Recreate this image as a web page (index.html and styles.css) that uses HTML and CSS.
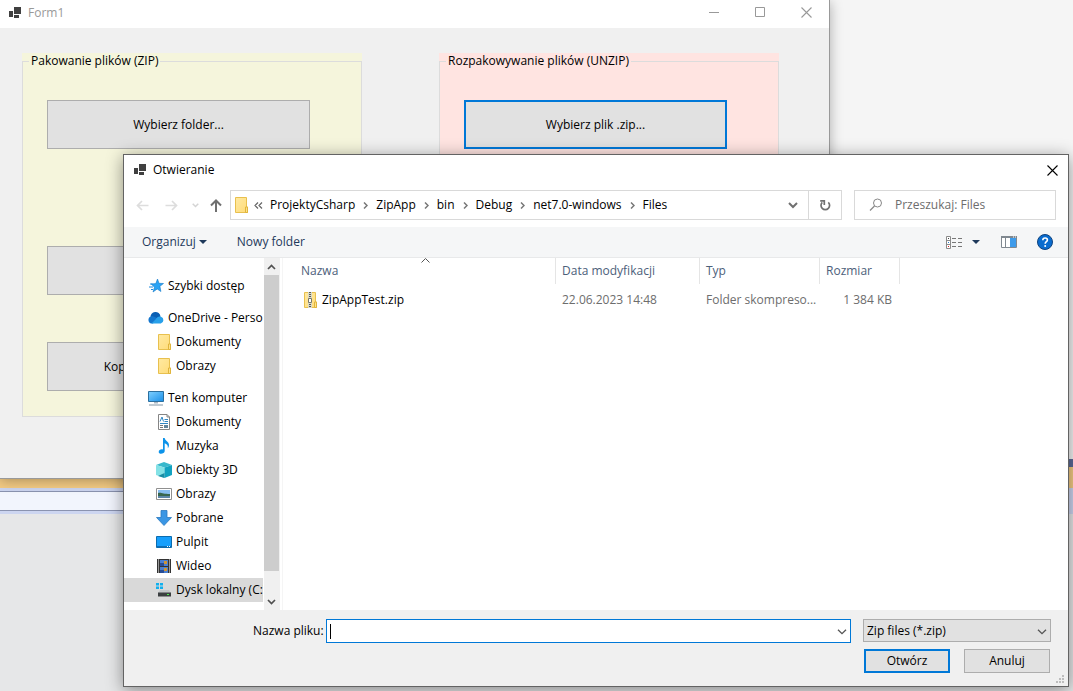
FILE: index.html
```html
<!DOCTYPE html>
<html lang="pl">
<head>
<meta charset="utf-8">
<title>Form1</title>
<link rel="stylesheet" href="styles.css">
</head>
<body>
<svg class="defs" width="0" height="0" aria-hidden="true">
  <defs>
    <linearGradient id="gFolder" x1="0" y1="0" x2="1" y2="1"><stop offset="0" stop-color="#ffe9a2"/><stop offset="1" stop-color="#ffdc78"/></linearGradient>
    <linearGradient id="gBlue" x1="0" y1="0" x2="1" y2="1"><stop offset="0" stop-color="#7fd0ff"/><stop offset="1" stop-color="#1a8fe8"/></linearGradient>
    <symbol id="app" viewBox="0 0 13 12">
      <path fill="#404040" d="M5 0h7v7H5zM0 4h4v6H0zM5 8h5v3H5z"/>
    </symbol>
    <symbol id="folder" viewBox="0 0 16 16">
      <path d="M2.500 .5h11v9.500h1v5.500h-12z" fill="url(#gFolder)" stroke="#e8c04e"/>
      <path d="M12.500 15.500V10h2v5.500z" fill="#ffe28a" stroke="#e0b53c"/>
    </symbol>
    <symbol id="chev" viewBox="0 0 5 7"><path d="M1 .5l3 3-3 3" fill="none" stroke="#777" stroke-width="1.500"/></symbol>
    <symbol id="down" viewBox="0 0 10 6"><path d="M1 .7l4 4 4-4" fill="none" stroke="currentColor" stroke-width="1.300"/></symbol>
    <symbol id="tri" viewBox="0 0 8 4"><path d="M0 0h8L4 4z" fill="#1e395b"/></symbol>
    <symbol id="close" viewBox="0 0 11 11"><path d="M.5 .5l10 10M10.500 .5l-10 10" fill="none" stroke="currentColor" stroke-width="1.100"/></symbol>
  </defs>
</svg>

<div class="desktop">
  <div class="band band-top"></div>
  <div class="band band-navy"></div>
  <div class="band band-tab"></div>
  <div class="band band-frame"><div class="band-field"></div></div>
  <div class="band band-rest"></div>

  <section class="form" aria-label="Form1">
    <header class="form-title">
      <svg class="app-icon" aria-hidden="true"><use href="#app"/></svg>
      <span class="form-name">Form1</span>
      <div class="win-controls">
        <button class="win-btn" aria-label="Minimalizuj"><svg width="11" height="11"><path d="M0 5.500h10" stroke="#999"/></svg></button>
        <button class="win-btn" aria-label="Maksymalizuj"><svg width="11" height="11"><path d="M.5 .5h9v9h-9z" fill="none" stroke="#999"/></svg></button>
        <button class="win-btn" aria-label="Zamknij"><svg width="11" height="11"><use href="#close"/></svg></button>
      </div>
    </header>
    <div class="form-body">
      <div class="group group-zip">
        <fieldset class="box">
          <legend>Pakowanie plików (ZIP)</legend>
          <div class="actions">
            <button class="big">Wybierz folder...</button>
            <button class="big push" aria-label="Pakuj"></button>
            <button class="big next">Kopiuj plik do folderu ZIP...</button>
          </div>
        </fieldset>
      </div>
      <div class="group group-unzip">
        <fieldset class="box">
          <legend>Rozpakowywanie plików (UNZIP)</legend>
          <div class="actions">
            <button class="big focused">Wybierz plik .zip...</button>
          </div>
        </fieldset>
      </div>
    </div>
  </section>

  <section class="dialog" role="dialog" aria-labelledby="dlg-title">
    <header class="dlg-title">
      <svg class="app-icon" aria-hidden="true"><use href="#app"/></svg>
      <span class="dlg-name" id="dlg-title">Otwieranie</span>
      <button class="dlg-close" aria-label="Zamknij"><svg width="11" height="11"><use href="#close"/></svg></button>
    </header>

    <nav class="nav">
      <div class="history">
        <button class="nav-btn" aria-label="Wstecz"><svg width="13" height="11"><path d="M12.500 5.500H1.500M6 1L1.500 5.500 6 10" fill="none" stroke="#ddd" stroke-width="1.700"/></svg></button>
        <button class="nav-btn" aria-label="Dalej"><svg width="13" height="11"><path d="M.5 5.500h11M7 1l4.500 4.500L7 10" fill="none" stroke="#ddd" stroke-width="1.700"/></svg></button>
        <button class="nav-btn recent" aria-label="Ostatnie"><svg width="7" height="5"><path d="M.7 .7l2.800 2.800L6.300 .7" fill="none" stroke="#d4d4d4" stroke-width="1.500"/></svg></button>
        <button class="nav-btn" aria-label="W górę"><svg width="12" height="13"><path d="M6 13V2M1 6.500L6 1.500l5 5" fill="none" stroke="#707070" stroke-width="2"/></svg></button>
      </div>
      <div class="address">
        <svg class="ico" aria-hidden="true"><use href="#folder"/></svg>
        <svg class="dbl" width="9" height="7" aria-hidden="true"><path d="M4 .5l-3 3 3 3M8 .5l-3 3 3 3" fill="none" stroke="#666" stroke-width="1.200"/></svg>
        <div class="crumbs">
          <a href="#">ProjektyCsharp</a><svg class="chev"><use href="#chev"/></svg>
          <a href="#">ZipApp</a><svg class="chev"><use href="#chev"/></svg>
          <a href="#">bin</a><svg class="chev"><use href="#chev"/></svg>
          <a href="#">Debug</a><svg class="chev"><use href="#chev"/></svg>
          <a href="#">net7.0-windows</a><svg class="chev"><use href="#chev"/></svg>
          <a href="#">Files</a>
        </div>
        <button class="addr-drop" aria-label="Poprzednie lokalizacje"><svg width="10" height="7"><path d="M1 1l4 4 4-4" fill="none" stroke="#707070" stroke-width="2"/></svg></button>
        <button class="refresh" aria-label="Odśwież"><svg width="12" height="12"><path d="M9.300 3.300A4.300 4.300 0 1 1 3.300 3.300M1.200 1.800H5.300V6" fill="none" stroke="#707070" stroke-width="1.700"/></svg></button>
      </div>
      <label class="search">
        <svg width="14" height="14" aria-hidden="true"><circle cx="8.500" cy="5" r="4" fill="none" stroke="#888"/><path d="M5.500 8L1 12.500" stroke="#888" stroke-width="1.300"/></svg>
        <input type="text" aria-label="Szukaj" placeholder="Przeszukaj: Files">
      </label>
    </nav>

    <div class="toolbar">
      <button class="tool">Organizuj <svg class="tri"><use href="#tri"/></svg></button>
      <button class="tool">Nowy folder</button>
      <div class="tool-right">
        <button class="tool view" aria-label="Widok">
          <svg width="17" height="13"><path d="M.5 .5h4v12h-4zM.5 4.500h4M.5 8.500h4" fill="#fff" stroke="#8a8a8a"/><path d="M2 2h1v1H2z" fill="#444"/><path d="M2 6h1v1H2z" fill="#2a7fd0"/><path d="M2 10h1v1H2z" fill="#d22"/><path d="M6 2.500h4M12 2.500h4M6 6.500h4M12 6.500h4M6 10.500h4M12 10.500h4" stroke="#777"/></svg>
          <svg class="tri"><use href="#tri"/></svg>
        </button>
        <button class="tool" aria-label="Okienko podglądu"><svg width="16" height="12"><path d="M.5 .5h15v11H.5z" fill="#fff" stroke="#808890"/><path d="M0 0h16v2H0z" fill="#808890"/><path d="M12 .5h1v1h-1zM14 .5h1v1h-1z" fill="#fff"/><path d="M4.500 2v9" stroke="#808890"/><path d="M9 2h6v9H9z" fill="#3e9bea"/></svg></button>
        <button class="tool" aria-label="Pomoc"><svg width="16" height="16"><circle cx="8" cy="8" r="7.500" fill="#0a6cce" stroke="#10437e"/><path d="M5.800 6.200c0-3 4.600-2.800 4.600-.2 0 1.700-2.200 1.600-2.200 3.800" fill="none" stroke="#fff" stroke-width="1.600"/><circle cx="8.200" cy="12" r="1" fill="#fff"/></svg></button>
      </div>
    </div>

    <div class="content">
      <aside class="side">
        <ul class="tree">
          <li><a href="#"><svg class="ico" viewBox="0 0 16 16"><path d="M9.500 1l1.500 4.300 4.500.2-3.600 2.800 1 5.200-3.700-2.500L5 14l1.500-4.800L3.200 6l4.600-.4z" fill="#2aa3f4" stroke="#1478c8" stroke-width=".6"/><path d="M2 6h2.500M1 9h4M3 11.500h2" stroke="#1e8ade"/></svg>Szybki dostęp</a></li>
          <li class="root"><a href="#"><svg class="ico" viewBox="0 0 16 16"><path d="M2.500 7.500a5 5 0 0 1 10-1L8 10z" fill="#0a5fb4"/><path d="M3.500 13.500a3.600 3.600 0 0 1-.5-7c2-.6 4.500.6 7 2.200l-5 4.800z" fill="#1376ce"/><path d="M7.500 9.500c1.500-3 4-3.500 5.500-2.700a3.500 3.500 0 0 1-.2 6.700H3.500z" fill="#28a0ea"/></svg>OneDrive - Personal</a></li>
          <li class="sub"><a href="#"><svg class="ico"><use href="#folder"/></svg>Dokumenty</a></li>
          <li class="sub"><a href="#"><svg class="ico"><use href="#folder"/></svg>Obrazy</a></li>
          <li class="root"><a href="#"><svg class="ico" viewBox="0 0 16 16"><path d="M.5 1.500h15v10H.5z" fill="url(#gBlue)" stroke="#2c6f9e"/><path d="M6 12h4v1.500H6z" fill="#aab7c2"/><path d="M1 15h14" stroke="#8296a6"/></svg>Ten komputer</a></li>
          <li class="sub"><a href="#"><svg class="ico" viewBox="0 0 16 16"><path d="M2.500 .5h8.500l2.500 2.500v12.500h-11z" fill="#fff" stroke="#858585"/><path d="M11 .5V3h2.500" fill="none" stroke="#858585"/><path d="M4 7.500L6 3l1.500 4.500M8.500 5.500H12M8.500 7.500H12M4 9.500h8" fill="none" stroke="#3087c4"/><path d="M4 11.500h3M4 13.500h3" stroke="#777"/><path d="M8 11h4v3H8z" fill="#64859b"/></svg>Dokumenty</a></li>
          <li class="sub"><a href="#"><svg class="ico" viewBox="0 0 16 16"><path d="M7 0h1.700c.2 2.500 4.300 3.500 4.300 7 0 1.500-.6 2.500-1.300 3.300.6-2.300-.5-4-3-5V13c0 3-6 4-6 1 0-2.200 2.500-3.200 4.300-2.500z" fill="#0c93ea"/></svg>Muzyka</a></li>
          <li class="sub"><a href="#"><svg class="ico" viewBox="0 0 16 16"><path d="M0 3L8 0l8 3-7.500 2.500z" fill="#38b8cc"/><path d="M0 3l8.500 2.500V16L0 13z" fill="#84e2e6"/><path d="M16 3L8.500 5.500V16l7.500-3z" fill="#12a2c0"/><path d="M2 14l6.500-3V16z" fill="#1b8ca4"/></svg>Obiekty 3D</a></li>
          <li class="sub"><a href="#"><svg class="ico" viewBox="0 0 16 16"><path d="M.5 2.500h15v11H.5z" fill="#fff" stroke="#909090"/><path d="M2 4h12v4H2z" fill="#86bdf0"/><path d="M2 7c3-1 5 1 12 1v2H2z" fill="#37664f"/><path d="M2 10h12v2H2z" fill="#5c86a8"/></svg>Obrazy</a></li>
          <li class="sub"><a href="#"><svg class="ico" viewBox="0 0 16 16"><path d="M5 .5h6v7h4.500L8 15.500.5 7.500H5z" fill="#3a96e4" stroke="#2878c0" stroke-width=".8"/></svg>Pobrane</a></li>
          <li class="sub"><a href="#"><svg class="ico" viewBox="0 0 16 16"><path d="M.5 2.500h15v11H.5z" fill="#169ffc" stroke="#0c6cae"/><path d="M1 12.500h14" stroke="#0d6db5"/><path d="M11 12.500h1M13 12.500h1" stroke="#fff"/></svg>Pulpit</a></li>
          <li class="sub"><a href="#"><svg class="ico" viewBox="0 0 16 16"><path d="M1 1h14v14H1z" fill="#333"/><path d="M4 2h8v6H4zM4 9h8v6H4z" fill="#4a7fd0"/><path d="M4 5h4v3H4zM4 12h4v3H4z" fill="#274c96"/><path d="M8 3h3v3H8zM8 10h3v3H8z" fill="#cf9434"/><path d="M2.500 1.500v14M13.500 1.500v14" stroke="#fff" stroke-dasharray="1 1"/></svg>Wideo</a></li>
          <li class="sub selected"><a href="#"><svg class="ico" viewBox="0 0 16 16"><path d="M0 1h3v2.500H0zM4 1h3v2.500H4zM0 4.500h3V7H0zM4 4.500h3V7H4z" fill="#12b0ee"/><path d="M4 8h9l2 3H2z" fill="#c3c7c9"/><path d="M2 10.500h13v4H2z" fill="#3b3e40"/><path d="M11 12h2v1h-2z" fill="#4cf04c"/></svg>Dysk lokalny (C:)</a></li>
        </ul>
        <div class="scroll" aria-hidden="true">
          <div class="scroll-end"><svg width="9" height="6"><path d="M1 5l3.500-3.500L8 5" fill="none" stroke="#505050" stroke-width="1.700"/></svg></div>
          <div class="scroll-track"><div class="thumb"></div></div>
          <div class="scroll-end"><svg width="9" height="6"><path d="M1 1l3.500 3.500L8 1" fill="none" stroke="#505050" stroke-width="1.700"/></svg></div>
        </div>
      </aside>
      <main class="files">
        <table class="list">
          <colgroup><col class="c-name"><col class="c-date"><col class="c-type"><col class="c-size"></colgroup>
          <thead>
            <tr>
              <th class="first">Nazwa<svg class="sort" width="9" height="5"><path d="M.5 4.500l4-4 4 4" fill="none" stroke="#555"/></svg></th>
              <th>Data modyfikacji</th><th>Typ</th><th>Rozmiar</th>
            </tr>
          </thead>
          <tbody>
            <tr>
              <td class="file"><span class="file-name"><svg class="ico" viewBox="0 0 16 16"><use href="#folder"/><path d="M6 0h4v16H6z" fill="#d8d8c8"/><path d="M8 0v16" stroke="#5b5b50" stroke-width="2" stroke-dasharray="1 1"/><path d="M6.500 6.500h3v4h-3z" fill="#fff" stroke="#77776a"/></svg>ZipAppTest.zip</span></td>
              <td>22.06.2023 14:48</td><td>Folder skompreso...</td><td class="num">1 384 KB</td>
            </tr>
          </tbody>
        </table>
      </main>
    </div>

    <footer class="foot">
      <div class="foot-row">
        <label class="foot-label" for="fname">Nazwa pliku:</label>
        <div class="combo">
          <input id="fname" type="text">
          <span class="caret"></span>
          <svg class="combo-arrow"><use href="#down"/></svg>
        </div>
        <div class="filter">
          <select aria-label="Typ pliku"><option>Zip files (*.zip)</option></select>
          <svg class="combo-arrow"><use href="#down"/></svg>
        </div>
      </div>
      <div class="foot-actions">
        <button class="cmd primary">Otwórz</button>
        <button class="cmd">Anuluj</button>
      </div>
      <svg class="grip" width="9" height="9" aria-hidden="true"><path d="M6 0h2v2H6zM3 3h2v2H3zM6 3h2v2H6zM0 6h2v2H0zM3 6h2v2H3zM6 6h2v2H6z" fill="#bdbdbd"/></svg>
    </footer>
  </section>
</div>
</body>
</html>
```

FILE: styles.css
```css
* { box-sizing: border-box; }

html, body { height: 100%; margin: 0; }

body, button, input, select {
  font-family: "Open Sans", "Noto Sans", sans-serif;
  font-size: 12px;
  line-height: 16px;
  color: #000;
}

button { padding: 0; border: 0; background: none; }
a { color: inherit; text-decoration: none; }
svg { display: block; flex: none; }
.defs { position: absolute; }
.ico { width: 16px; height: 16px; }
.app-icon { width: 13px; height: 12px; }

/* Windows behind the form */
.desktop {
  position: relative;
  display: flex;
  flex-direction: column;
  min-height: 100%;
  overflow: hidden;
}
.band-top { height: 459px; background: #f5f5f5; }
.band-navy { height: 8px; background: #5d6b99; }
.band-tab { height: 21px; background: #f5cc84; }
.band-frame { height: 26px; padding: 3px 40px 3px 0; background: #ccd5f0; }
.band-field { height: 20px; background: #f2f5fd; border: solid #8a93b0; border-width: 1px 0; }
.band-rest { flex: 1; background: #e6e7e8; }

/* Main form */
.form {
  position: absolute;
  top: 0;
  left: 0;
  width: 830px;
  height: 479px;
  background: #f0f0f0;
  border: solid #999;
  border-width: 0 1px 1px 0;
  box-shadow: 0 2px 12px rgba(0, 0, 0, .3);
}
.form-title { display: flex; align-items: center; height: 28px; padding: 0 0 2px 9px; background: #fff; }
.form-name { margin-left: 6px; color: #999; }
.win-controls { display: flex; align-self: flex-start; margin-left: auto; }
.win-btn { display: grid; place-items: center; width: 46px; height: 24px; color: #999; }
.form-body { display: flex; align-items: flex-start; gap: 77px; padding: 25px 22px; }
.group { width: 340px; height: 364px; }
.group-zip { background: #f5f5dc; }
.group-unzip { background: #ffe4e1; }
.box { height: 100%; margin: 0; padding: 0 6px; border: 1px solid #dcdcdc; }
.box legend { padding: 0 2px; }
.actions { display: flex; flex-direction: column; padding: 31px 18px 0; }
.big { width: 263px; height: 49px; background: #e1e1e1; border: 1px solid #adadad; }
.big.push { margin-top: 97px; }
.big.next { margin-top: 47px; }
.big.focused { border: 2px solid #0078d7; }

/* File dialog */
.dialog {
  position: absolute;
  top: 154px;
  right: 4px;
  bottom: 4px;
  left: 123px;
  display: flex;
  flex-direction: column;
  background: #fff;
  border: 1px solid #636363;
  box-shadow: 0 3px 16px rgba(0, 0, 0, .42);
}
.dlg-title { display: flex; align-items: center; height: 30px; padding: 0 10px; }
.dlg-name { margin-left: 6px; }
.dlg-close { margin-left: auto; }

.nav { display: flex; align-items: center; height: 42px; padding: 0 12px 2px; }
.history { display: flex; align-items: center; gap: 16px; width: 94px; }
.recent { margin: 0 -5px 0 -2px; }
.address { display: flex; flex: 3; align-items: center; height: 30px; padding-left: 2px; border: 1px solid #d9d9d9; }
.dbl { margin: 0 7px 0 5px; }
.crumbs { display: flex; flex: 1; align-items: center; gap: 8px; }
.chev { width: 5px; height: 7px; }
.addr-drop { display: grid; place-items: center; width: 30px; height: 28px; }
.refresh { display: grid; place-items: center; width: 33px; height: 28px; border-left: 1px solid #d9d9d9; }
.search { display: flex; align-items: center; width: 202px; height: 30px; margin-left: 12px; padding-left: 14px; border: 1px solid #d9d9d9; }
.search input { width: 150px; margin-left: 12px; padding: 0; border: 0; outline: 0; background: none; }
.search input::placeholder { color: #6d6d6d; opacity: 1; }

.toolbar { display: flex; align-items: center; gap: 30px; height: 31px; padding: 0 15px 0 18px; background: #f5f6f7; border-bottom: 1px solid #e8e9ea; }
.tool { display: flex; align-items: center; gap: 3px; color: #1e395b; }
.tri { width: 8px; height: 4px; }
.tool-right { display: flex; align-items: center; gap: 20px; margin-left: auto; }
.view { gap: 9px; padding-right: 1px; }

.content { display: flex; flex: 1; min-height: 0; }
.side { display: flex; width: 159px; border-right: 1px solid #f5f5f5; }
.tree { width: 140px; margin: 0; padding: 16px 1px 0 0; list-style: none; overflow: hidden; }
.tree a { display: flex; align-items: center; gap: 4px; height: 24px; padding-left: 24px; overflow: hidden; white-space: nowrap; }
.tree .root { margin-top: 8px; }
.tree .sub a { padding-left: 32px; }
.tree .selected { background: #d9d9d9; }
.scroll { display: flex; flex-direction: column; width: 16px; background: #f0f0f0; }
.scroll-end { display: grid; place-items: center; width: 15px; height: 17px; }
.scroll-track { flex: 1; }
.thumb { width: 15px; height: 93%; background: #cdcdcd; }

.files { flex: 1; }
.list { table-layout: fixed; width: 617px; border-collapse: separate; border-spacing: 0; color: #6d6d6d; }
.c-name { width: 273px; }
.c-date { width: 144px; }
.c-type { width: 120px; }
.c-size { width: 80px; }
.list th { position: relative; height: 26px; padding: 0 6px; border-right: 1px solid #e5e5e5; color: #4c607a; font-weight: 400; text-align: left; }
.list th.first { padding-left: 18px; }
.list td { height: 32px; padding: 0 6px; white-space: nowrap; }
.list td.file { padding-left: 19px; }
.list td.num { padding-right: 8px; text-align: right; }
.file-name { display: flex; align-items: center; gap: 4px; color: #000; }
.sort { position: absolute; top: 0; left: 138px; }

.foot { position: relative; height: 76px; padding: 9px 17px 0 129px; background: #f0f0f0; }
.foot-row { display: flex; align-items: flex-start; }
.foot-label { width: 73px; line-height: 24px; white-space: nowrap; }
.combo, .filter { position: relative; height: 24px; }
.combo { flex: 1; }
.combo input { width: 100%; height: 24px; padding: 0 24px 0 4px; border: 1px solid #0078d7; border-radius: 0; background: #fff; outline: 0; }
.caret { position: absolute; top: 5px; left: 4px; width: 1px; height: 15px; background: #000; }
.filter { width: 188px; margin-left: 12px; }
.filter select { width: 100%; height: 23px; padding: 0 20px 0 3px; appearance: none; border: 1px solid #adadad; border-radius: 0; background: #e1e1e1; }
.combo-arrow { position: absolute; top: 10px; right: 4px; width: 10px; height: 6px; color: #555; pointer-events: none; }
.foot-actions { display: flex; justify-content: flex-end; gap: 14px; margin-top: 6px; padding-right: 1px; }
.cmd { width: 86px; height: 24px; background: #e1e1e1; border: 1px solid #adadad; }
.cmd.primary { border: 2px solid #0078d7; }
.grip { position: absolute; right: 3px; bottom: 2px; }
```
